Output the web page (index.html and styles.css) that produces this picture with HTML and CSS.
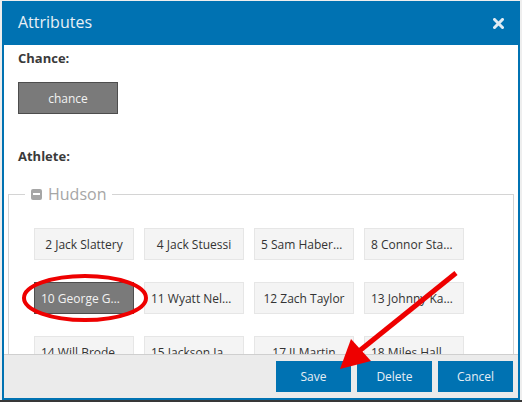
FILE: index.html
```html
<!DOCTYPE html>
<html lang="en">
<head>
    <meta charset="UTF-8">
    <title>Attributes</title>
    <link rel="stylesheet" href="styles.css">
</head>
<body>
    <div class="modal">
        <div class="modal-header">
            <h2>Attributes</h2>
            <span class="close">
                <svg width="11" height="11" viewBox="0 0 11 11"><path d="M1.5 1.5 L9.5 9.5 M9.5 1.5 L1.5 9.5" stroke="currentColor" stroke-width="3" stroke-linecap="square"/></svg>
            </span>
        </div>

        <div class="modal-body">
            <div class="field-label">Chance:</div>
            <button class="opt dark">chance</button>

            <div class="field-label athlete">Athlete:</div>
            <fieldset class="team">
                <legend>
                    <span class="toggle"></span>Hudson
                </legend>
                <div class="roster">
                    <button class="opt">2 Jack Slattery</button>
                    <button class="opt">4 Jack Stuessi</button>
                    <button class="opt">5 Sam Haberman</button>
                    <button class="opt">8 Connor Stanley</button>
                    <button class="opt dark">10 George Gwynn</button>
                    <button class="opt">11 Wyatt Nelson</button>
                    <button class="opt">12 Zach Taylor</button>
                    <button class="opt">13 Johnny Kasper</button>
                    <button class="opt">14 Will Broderick</button>
                    <button class="opt">15 Jackson James</button>
                    <button class="opt">17 JJ Martin</button>
                    <button class="opt">18 Miles Hallman</button>
                </div>
            </fieldset>
        </div>

        <div class="modal-footer">
            <button class="action">Save</button>
            <button class="action">Delete</button>
            <button class="action">Cancel</button>
        </div>
    </div>

    <!-- red markup drawn over the screenshot -->
    <svg class="markup" width="522" height="402" viewBox="0 0 522 402">
        <ellipse cx="85" cy="298" rx="61" ry="22" fill="none" stroke="#ee0000" stroke-width="4"/>
        <line x1="456" y1="273" x2="358" y2="352" stroke="#ee0000" stroke-width="5"/>
        <polygon points="340,369 351,339 371,361" fill="#ee0000"/>
    </svg>
</body>
</html>
```

FILE: styles.css
```css
* {
    margin: 0;
    padding: 0;
    box-sizing: border-box;
}

body {
    width: 522px;
    height: 402px;
    background: linear-gradient(to bottom, #eeeeee 400px, #383838 400px);
    font-family: "Open Sans", "Liberation Sans", sans-serif;
    color: #333;
    overflow: hidden;
    position: relative;
}

.modal {
    margin: 1px 0 0 2px;
    width: 518px;
    height: 399px;
    border: 2px solid #0072b2;
    border-top: 0;
    background: #fff;
    display: flex;
    flex-direction: column;
}

.modal-header {
    height: 44px;
    background: #0072b2;
    display: flex;
    align-items: center;
    justify-content: space-between;
    padding: 0 14px 0 14px;
}

.modal-header h2 {
    font-size: 16px;
    font-weight: normal;
    color: #e8f0f6;
    margin-top: -2px;
}

.close {
    color: #e0ebf3;
    display: flex;
    margin-top: 1px;
}

.modal-body {
    flex: 1;
    overflow: hidden;
    padding: 4px 14px 0;
}

.field-label {
    font-size: 13px;
    font-weight: bold;
    line-height: 18px;
    color: #3a3a3a;
}

.field-label.athlete {
    margin-top: 33px;
}

.opt {
    width: 100px;
    height: 32px;
    padding: 0 6px;
    font-family: inherit;
    font-size: 12px;
    color: #333;
    background: #f4f4f4;
    border: 1px solid #e6e6e6;
    white-space: nowrap;
    overflow: hidden;
    text-overflow: ellipsis;
}

.opt.dark {
    background: #7a7a7a;
    border-color: #4d4d4d;
    color: #f2f2f2;
}

.modal-body > .opt.dark {
    margin-top: 15px;
}

.team {
    margin: 17px -10px 0;
    border: 1px solid #d4d4d4;
    padding: 0 0 20px 16px;
}

.team legend {
    padding: 0 6px;
    font-size: 16px;
    color: #a6a6a6;
    line-height: 24px;
    display: flex;
    align-items: center;
}

.toggle {
    width: 11px;
    height: 11px;
    border-radius: 2px;
    background: #a6a6a6;
    margin-right: 6px;
    position: relative;
}

.toggle::after {
    content: "";
    position: absolute;
    left: 2px;
    right: 2px;
    top: 4.5px;
    height: 2px;
    background: #fff;
}

.roster {
    margin: 22px 0 0 9px;
    display: flex;
    flex-wrap: wrap;
    gap: 22px 10px;
}

.modal-footer {
    height: 44px;
    background: #ebebeb;
    border-top: 1px solid #cfcfcf;
    display: flex;
    justify-content: flex-end;
    align-items: center;
    gap: 6px;
    padding: 0 5px 1px 0;
}

.action {
    width: 75px;
    height: 31px;
    background: #0072b2;
    color: #e6eef5;
    border: none;
    font-family: inherit;
    font-size: 12px;
}

.markup {
    position: absolute;
    top: 0;
    left: 0;
    pointer-events: none;
}
```
